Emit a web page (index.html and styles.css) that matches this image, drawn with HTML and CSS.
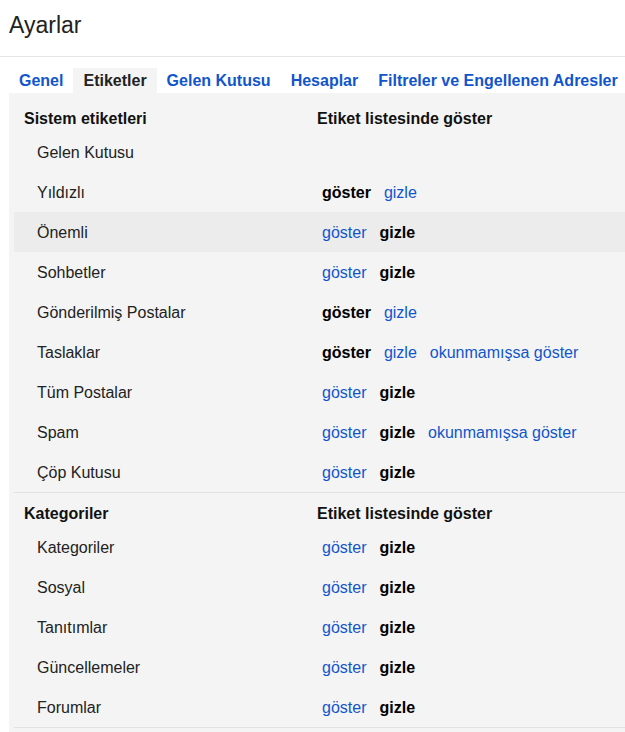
FILE: index.html
```html
<!DOCTYPE html>
<html lang="tr">
<head>
    <meta charset="UTF-8">
    <meta name="viewport" content="width=device-width, initial-scale=1.0">
    <title>Ayarlar</title>
    <link rel="stylesheet" href="styles.css">
</head>
<body>

    <h1 class="title">Ayarlar</h1>

    <!-- Tabs -->
    <div class="tabs">
        <a class="tab" href="#">Genel</a>
        <span class="tab active">Etiketler</span>
        <a class="tab" href="#">Gelen Kutusu</a>
        <a class="tab" href="#">Hesaplar</a>
        <a class="tab" href="#">Filtreler ve Engellenen Adresler</a>
    </div>

    <div class="panel">
        <div class="section">
            <div class="head">
                <span>Sistem etiketleri</span>
                <span>Etiket listesinde göster</span>
            </div>
            <div class="row">
                <span class="name">Gelen Kutusu</span>
                <span class="opts"></span>
            </div>
            <div class="row">
                <span class="name">Yıldızlı</span>
                <span class="opts"><b>göster</b><a href="#">gizle</a></span>
            </div>
            <div class="row hover">
                <span class="name">Önemli</span>
                <span class="opts"><a href="#">göster</a><b>gizle</b></span>
            </div>
            <div class="row">
                <span class="name">Sohbetler</span>
                <span class="opts"><a href="#">göster</a><b>gizle</b></span>
            </div>
            <div class="row">
                <span class="name">Gönderilmiş Postalar</span>
                <span class="opts"><b>göster</b><a href="#">gizle</a></span>
            </div>
            <div class="row">
                <span class="name">Taslaklar</span>
                <span class="opts"><b>göster</b><a href="#">gizle</a><a href="#">okunmamışsa göster</a></span>
            </div>
            <div class="row">
                <span class="name">Tüm Postalar</span>
                <span class="opts"><a href="#">göster</a><b>gizle</b></span>
            </div>
            <div class="row">
                <span class="name">Spam</span>
                <span class="opts"><a href="#">göster</a><b>gizle</b><a href="#">okunmamışsa göster</a></span>
            </div>
            <div class="row">
                <span class="name">Çöp Kutusu</span>
                <span class="opts"><a href="#">göster</a><b>gizle</b></span>
            </div>
        </div>

        <div class="section">
            <div class="head">
                <span>Kategoriler</span>
                <span>Etiket listesinde göster</span>
            </div>
            <div class="row">
                <span class="name">Kategoriler</span>
                <span class="opts"><a href="#">göster</a><b>gizle</b></span>
            </div>
            <div class="row">
                <span class="name">Sosyal</span>
                <span class="opts"><a href="#">göster</a><b>gizle</b></span>
            </div>
            <div class="row">
                <span class="name">Tanıtımlar</span>
                <span class="opts"><a href="#">göster</a><b>gizle</b></span>
            </div>
            <div class="row">
                <span class="name">Güncellemeler</span>
                <span class="opts"><a href="#">göster</a><b>gizle</b></span>
            </div>
            <div class="row">
                <span class="name">Forumlar</span>
                <span class="opts"><a href="#">göster</a><b>gizle</b></span>
            </div>
        </div>
    </div>

</body>
</html>
```

FILE: styles.css
```css
body {
    font-family: 'Liberation Sans', Arial, sans-serif;
    font-size: 16px;
    color: #222;
    margin: 0;
    padding: 0;
    background-color: #fff;
    overflow: hidden;
    height: 732px;
}

a {
    color: #15c;
    text-decoration: none;
}

.title {
    font-size: 23px;
    font-weight: normal;
    line-height: 30px;
    margin: 0;
    padding: 10px 9px 16px;
    border-bottom: 1px solid #e5e5e5;
}

/* Tabs */
.tabs {
    display: flex;
    margin-top: 11px;
    padding-left: 9px;
}

.tab {
    height: 25px;
    line-height: 25px;
    padding: 0 10px;
    font-weight: bold;
    white-space: nowrap;
}

.tab.active {
    background-color: #f4f4f4;
    color: #222;
}

/* Panel */
.panel {
    margin-left: 9px;
    padding: 5px 0 0 5px;
    background-color: #f4f4f4;
    min-height: 700px;
}

.section {
    border-bottom: 1px solid #e2e2e2;
    padding-top: 6px;
}

.head {
    display: grid;
    grid-template-columns: 303px 1fr;
    height: 28px;
    align-items: center;
    padding-left: 11px;
    padding-top: 2px;
    box-sizing: border-box;
    font-weight: bold;
    color: #111;
}

.head span:first-child {
    margin-left: -1px;
}

.head span:last-child {
    margin-left: -11px;
}

.row {
    display: grid;
    grid-template-columns: 308px 1fr;
    height: 40px;
    align-items: center;
}

.row.hover {
    background-color: #ececec;
}

.name {
    padding-left: 23px;
    padding-top: 2px;
}

.opts {
    display: flex;
    gap: 13px;
    padding-top: 2px;
}

.opts b {
    color: #000;
}
```
